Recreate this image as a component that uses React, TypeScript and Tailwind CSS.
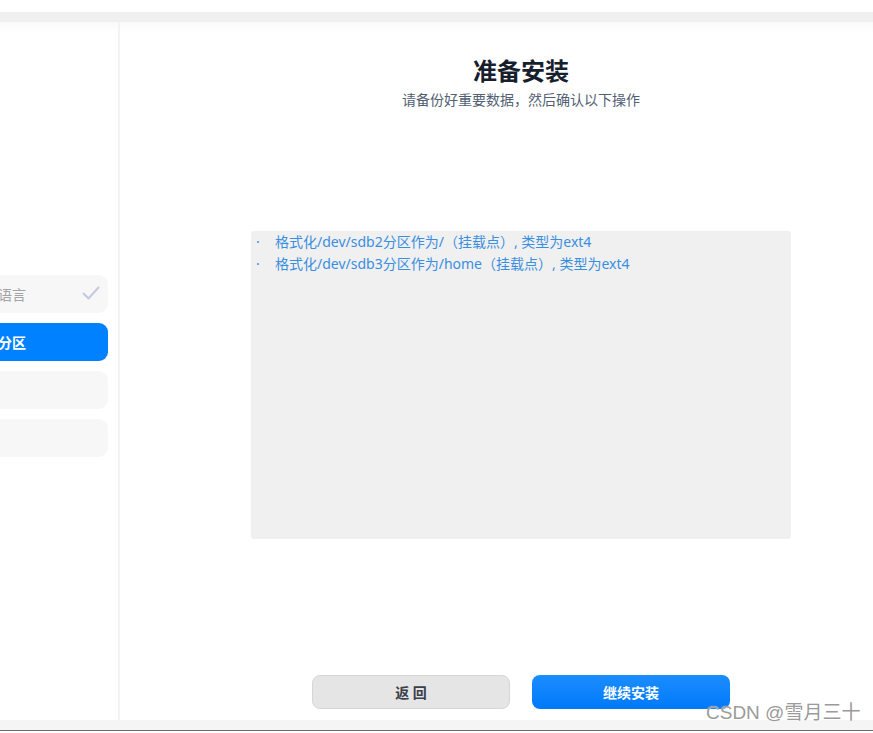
import React from 'react';

const font = { fontFamily: '"Noto Sans", "Noto Sans CJK SC", sans-serif' };

function SideItem({ label, active, done }: { label?: string; active?: boolean; done?: boolean }) {
  return (
    <div
      className={
        'relative -ml-[20px] flex h-[38px] w-[128px] items-center rounded-[9px] pl-[18px] text-[14px] ' +
        (active ? 'bg-[#0081ff] font-bold text-white' : 'bg-[#f7f7f8] text-[#a3a3a3]')
      }
    >
      {label}
      {done && (
        <svg className="absolute right-[8px] top-[11px]" width="18" height="14" viewBox="0 0 18 14" fill="none">
          <path d="M1.5 7.5 L6.5 12.5 L16.5 1.5" stroke="#c3cadb" strokeWidth="2" strokeLinecap="round" strokeLinejoin="round" />
        </svg>
      )}
    </div>
  );
}

export default function App() {
  const lines = [
    '格式化/dev/sdb2分区作为/（挂载点）, 类型为ext4',
    '格式化/dev/sdb3分区作为/home（挂载点）, 类型为ext4',
  ];
  return (
    <div className="relative flex h-[733px] w-[873px] flex-col overflow-hidden bg-white" style={font}>
      <div className="h-[12px] bg-white" />
      <div className="h-[10px] bg-[#f0f0f0]" />
      <div className="flex h-[698px] bg-gradient-to-b from-[#f9f9f9] to-white to-[12px]">
        <div className="flex w-[118px] flex-col gap-[10px] overflow-hidden pt-[253px]">
          <SideItem label="语言" done />
          <SideItem label="分区" active />
          <SideItem />
          <SideItem />
        </div>
        <div className="w-[2px] bg-[#f3f3f3]" />
        <div className="flex flex-1 flex-col pl-[131px]">
          <div className="flex w-[540px] flex-col items-center pt-[33px]">
            <div className="text-[24px] font-bold leading-[32px] text-[#16202d]">准备安装</div>
            <div className="mt-[3px] text-[14px] leading-[20px] text-[#526073]">请备份好重要数据，然后确认以下操作</div>
          </div>
          <div className="mt-[121px] h-[308px] w-[540px] rounded-[3px] bg-[#f0f0f0] pl-[5px] text-[14px] leading-[22px] text-[#3a8ee0]">
            {lines.map((l) => (
              <div key={l} className="flex">
                <span className="w-[19px]">·</span>
                <span>{l}</span>
              </div>
            ))}
          </div>
          <div className="ml-[61px] mt-[136px] flex gap-[22px]">
            <button className="h-[34px] w-[198px] rounded-[8px] border border-[#d6d6d6] bg-[#e5e5e5] text-[14px] font-semibold text-[#3a3f4a]">
              返 回
            </button>
            <button className="h-[34px] w-[198px] rounded-[8px] bg-gradient-to-b from-[#1a8dff] to-[#0079fa] text-[14px] font-bold text-white">
              继续安装
            </button>
          </div>
        </div>
      </div>
      <div className="h-[10px] bg-[#f5f5f5]" />
      <div className="h-[1px] bg-[#6b6b6b]" />
      <div className="flex-1 bg-white" />
      <div
        className="absolute left-[706px] top-[700px] text-[19px] leading-[26px] text-[#9a9a9a]"
        style={{ fontFamily: '"Liberation Sans", "Noto Sans CJK SC", sans-serif', textShadow: '0 0 1px #fff' }}
      >
        CSDN @雪月三十
      </div>
    </div>
  );
}
